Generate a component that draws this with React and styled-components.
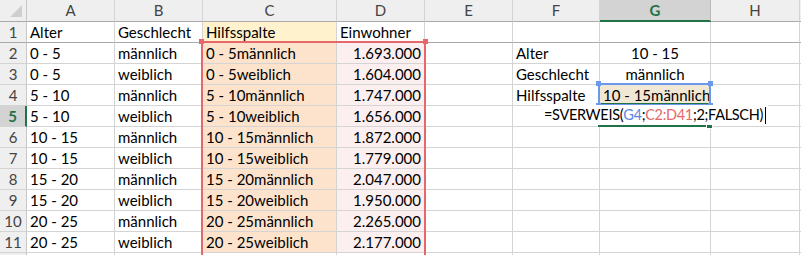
import React from 'react'
import styled, { createGlobalStyle, css } from 'styled-components'

const GlobalStyle = createGlobalStyle`
  html, body {
    margin: 0;
    padding: 0;
    background: #fff;
    overflow: hidden;
  }
  body {
    font-family: Lato, "Liberation Sans", sans-serif;
  }
`

const GRID = '#d4d4d4'
const GREEN = '#217346'
const RED = '#e6686b'
const BLUE = '#6a98ea'

const Sheet = styled.div`
  position: relative;
  display: grid;
  grid-template-columns: 27px 88px 88px 134px 88px 88px 87px 111px 89px 1fr;
  grid-template-rows: 22px repeat(12, 21px);
  width: 801px;
  height: 255px;
  overflow: hidden;
  font-size: 15px;
  color: #000;
`

const Corner = styled.div`
  position: relative;
  background: #efefef;
  border-right: 1px solid #c8c8c8;
  border-bottom: 1px solid #a9a9a9;
  box-sizing: border-box;
  &::after {
    content: '';
    position: absolute;
    right: 4px;
    bottom: 4px;
    width: 0;
    height: 0;
    border-left: 12px solid transparent;
    border-bottom: 12px solid #cfcfcf;
  }
`

const ColHead = styled.div`
  box-sizing: border-box;
  background: ${p => (p.$active ? '#d3d3d3' : '#efefef')};
  border-right: 1px solid ${p => (p.$active ? '#b9b9b9' : '#d4d4d4')};
  border-bottom: ${p => (p.$active ? `2px solid ${GREEN}` : '1px solid #a9a9a9')};
  color: ${p => (p.$active ? GREEN : '#444')};
  font-weight: ${p => (p.$active ? 700 : 400)};
  text-align: center;
  line-height: 21px;
`

const RowHead = styled.div`
  box-sizing: border-box;
  background: ${p => (p.$active ? '#d3d3d3' : '#efefef')};
  border-right: ${p => (p.$active ? `2px solid ${GREEN}` : '1px solid #c8c8c8')};
  border-bottom: 1px solid ${p => (p.$frozen ? '#a9a9a9' : GRID)};
  color: ${p => (p.$active ? GREEN : '#444')};
  font-weight: ${p => (p.$active ? 700 : 400)};
  text-align: center;
  line-height: 21px;
`

const Cell = styled.div`
  box-sizing: border-box;
  background: ${p => p.$fill || '#fff'};
  border-right: 1px solid ${GRID};
  border-bottom: 1px solid ${p => (p.$frozen ? '#a9a9a9' : GRID)};
  padding: 0 3px;
  line-height: 21px;
  white-space: nowrap;
  overflow: hidden;
  text-align: ${p => p.$align || 'left'};
`

const RefBox = styled.div`
  position: absolute;
  box-sizing: border-box;
  border: 2px solid ${p => p.$color};
  pointer-events: none;
`

const Handle = styled.span`
  position: absolute;
  width: 5px;
  height: 5px;
  background: ${p => p.$color};
  ${p => (p.$top ? css`top: -4px;` : css`bottom: -4px;`)}
  ${p => (p.$left ? css`left: -4px;` : css`right: -4px;`)}
`

const ActiveCell = styled.div`
  position: absolute;
  left: 598px;
  top: 103px;
  width: 113px;
  height: 24px;
  box-sizing: border-box;
  border-top: 2px solid ${GREEN};
  border-bottom: 2px solid ${GREEN};
`

const FillHandle = styled.span`
  position: absolute;
  right: -2px;
  bottom: -4px;
  width: 5px;
  height: 5px;
  background: ${GREEN};
  border: 1px solid #fff;
`

const EditArea = styled.div`
  position: absolute;
  left: 599px;
  top: 105px;
  width: 111px;
  height: 20px;
  display: flex;
  justify-content: center;
  font-size: 14.5px;
  letter-spacing: -0.3px;
  line-height: 20px;
`

const EditText = styled.span`
  background: #fff;
  white-space: nowrap;
  padding: 0 2px 0 3px;
  display: flex;
  align-items: center;
`

const Ref = styled.span`
  color: ${p => p.$color};
`

const Caret = styled.span`
  display: inline-block;
  width: 1px;
  height: 17px;
  background: #000;
  margin-left: 2px;
`

const cols = ['A', 'B', 'C', 'D', 'E', 'F', 'G', 'H', '']

const rows = [
  ['Alter', 'Geschlecht', 'Hilfsspalte', 'Einwohner', '', '', '', '', ''],
  ['0 - 5', 'männlich', '0 - 5männlich', '1.693.000', '', 'Alter', '10 - 15', '', ''],
  ['0 - 5', 'weiblich', '0 - 5weiblich', '1.604.000', '', 'Geschlecht', 'männlich', '', ''],
  ['5 - 10', 'männlich', '5 - 10männlich', '1.747.000', '', 'Hilfsspalte', '10 - 15männlich', '', ''],
  ['5 - 10', 'weiblich', '5 - 10weiblich', '1.656.000', '', '', '', '', ''],
  ['10 - 15', 'männlich', '10 - 15männlich', '1.872.000', '', '', '', '', ''],
  ['10 - 15', 'weiblich', '10 - 15weiblich', '1.779.000', '', '', '', '', ''],
  ['15 - 20', 'männlich', '15 - 20männlich', '2.047.000', '', '', '', '', ''],
  ['15 - 20', 'weiblich', '15 - 20weiblich', '1.950.000', '', '', '', '', ''],
  ['20 - 25', 'männlich', '20 - 25männlich', '2.265.000', '', '', '', '', ''],
  ['20 - 25', 'weiblich', '20 - 25weiblich', '2.177.000', '', '', '', '', ''],
  ['', '', '', '', '', '', '', '', ''],
]

function cellFill(r, c) {
  if (c === 2) return r === 0 ? '#fff2cc' : r <= 10 ? '#fde3cc' : null
  if (c === 3 && r >= 1 && r <= 10) return '#fcefef'
  if (c === 6 && r === 3) return '#f0e7d5'
  return null
}

function cellAlign(r, c) {
  if (c === 3 && r >= 1) return 'right'
  if (c === 6) return 'center'
  return 'left'
}

export default function App() {
  return (
    <>
      <GlobalStyle />
      <Sheet>
        <Corner />
        {cols.map((c, i) => (
          <ColHead key={'h' + i} $active={c === 'G'}>{c}</ColHead>
        ))}
        {rows.map((row, r) => (
          <React.Fragment key={r}>
            {/* row 12 only peeks in at the bottom edge, its number is not visible */}
            <RowHead $active={r === 4} $frozen={r === 0}>{r < 11 ? r + 1 : ''}</RowHead>
            {row.map((v, c) => (
              <Cell
                key={c}
                $fill={cellFill(r, c)}
                $align={cellAlign(r, c)}
                $frozen={r === 0}
              >
                {r === 4 && c === 6 ? '' : v}
              </Cell>
            ))}
          </React.Fragment>
        ))}

        <RefBox $color={RED} style={{ left: 201, top: 41, width: 225, height: 240 }}>
          <Handle $color={RED} $top $left />
          <Handle $color={RED} $top />
        </RefBox>

        <ActiveCell>
          <FillHandle />
        </ActiveCell>

        <RefBox $color={BLUE} style={{ left: 598, top: 83, width: 113, height: 23 }}>
          <Handle $color={BLUE} $top $left />
          <Handle $color={BLUE} $top />
          <Handle $color={BLUE} $left />
          <Handle $color={BLUE} />
        </RefBox>

        <EditArea>
          <EditText>
            =SVERWEIS(<Ref $color="#5b86e0">G4</Ref>;<Ref $color={RED}>C2:D41</Ref>;2;FALSCH)
            <Caret />
          </EditText>
        </EditArea>
      </Sheet>
    </>
  )
}
